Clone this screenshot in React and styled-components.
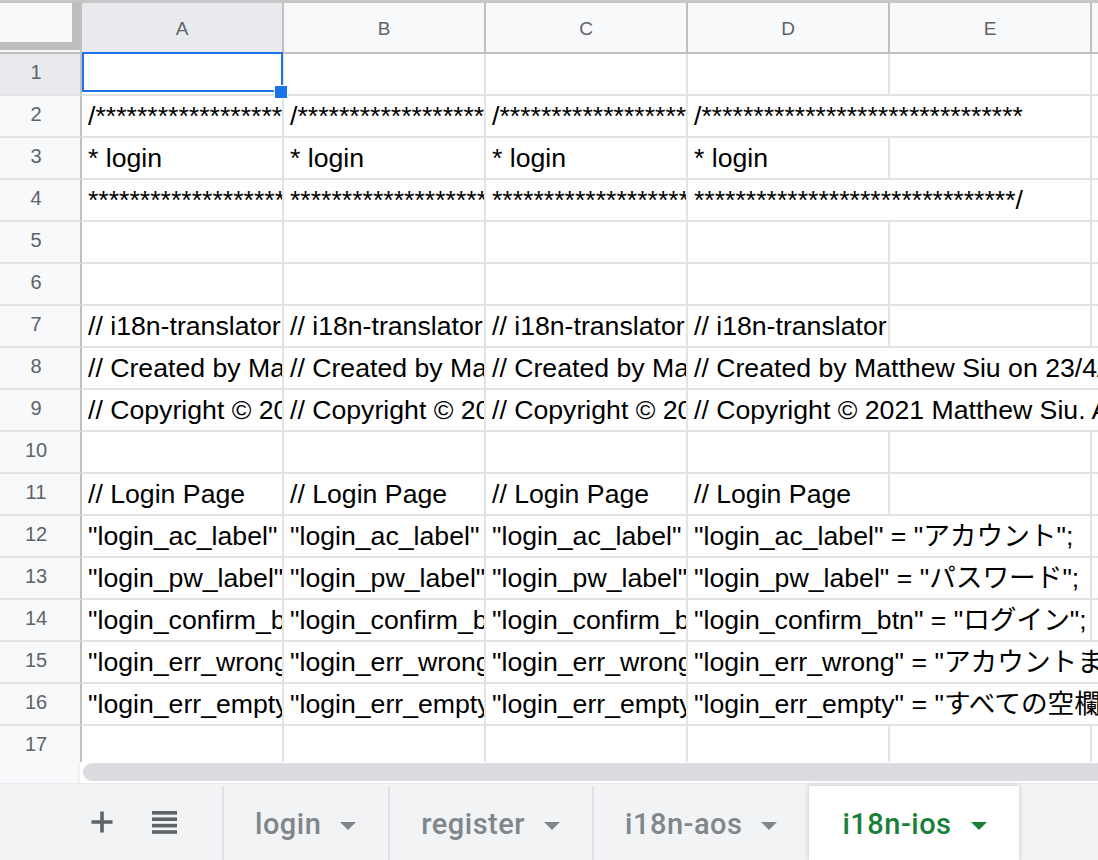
import React from 'react';
import styled, { createGlobalStyle } from 'styled-components';

const GlobalStyle = createGlobalStyle`
  html, body { margin: 0; padding: 0; background: #ffffff; overflow: hidden; }
  body { font-family: "Liberation Sans", Arial, "Noto Sans CJK JP", sans-serif; }
  * { box-sizing: border-box; }
`;

const COLS = ['A', 'B', 'C', 'D', 'E', 'F'];
const GRID = '82px repeat(6, 202px)';

const Screen = styled.div`
  width: 1098px;
  height: 860px;
  display: flex;
  flex-direction: column;
  overflow: hidden;
  border-top: 3px solid #c4c7c5;
`;

const GridViewport = styled.div`
  flex: 0 0 759px;
  overflow: hidden;
`;

const Row = styled.div`
  display: grid;
  grid-template-columns: ${GRID};
  height: ${p => (p.$header ? 51 : 42)}px;
`;

const Corner = styled.div`
  background: #f8f9fa;
  border-right: 2px solid #c0c0c0;
  border-bottom: 2px solid #c0c0c0;
`;

const FreezeHandle = styled.div`
  width: 80px;
  height: 47px;
  background: #f8f9fa;
  border-right: 8px solid #bdbdbd;
  border-bottom: 8px solid #bdbdbd;
`;

const ColHeader = styled.div`
  display: flex;
  align-items: center;
  justify-content: center;
  background: ${p => (p.$active ? '#e8eaed' : '#f8f9fa')};
  border-right: 2px solid #c0c0c0;
  border-bottom: 2px solid #c0c0c0;
  color: #5f6368;
  font-size: 19px;
  padding-top: 2px;
`;

const RowHeader = styled.div`
  display: flex;
  align-items: center;
  justify-content: center;
  padding: 0 8px 3px 0;
  background: ${p => (p.$active ? '#e8eaed' : '#f8f9fa')};
  border-right: 2px solid #c0c0c0;
  border-bottom: 2px solid #e2e3e3;
  color: #5f6368;
  font-size: 20px;
`;

const Cell = styled.div`
  position: relative;
  display: flex;
  align-items: flex-end;
  min-width: 0;
  grid-column: span ${p => p.$span || 1};
  border-right: 2px solid #e2e3e3;
  border-bottom: 2px solid #e2e3e3;
  background: #ffffff;
`;

const CellText = styled.span`
  display: block;
  width: 100%;
  overflow: hidden;
  white-space: nowrap;
  padding: 0 0 5px 6px;
  font-size: 26.67px;
  line-height: 30px;
  color: #000000;
`;

const Selection = styled.div`
  position: absolute;
  top: -2px;
  left: 0;
  right: -1px;
  bottom: 2px;
  border: 2px solid #1a73e8;
  z-index: 2;
  pointer-events: none;
`;

const FillHandle = styled.div`
  position: absolute;
  left: 192px;
  top: 31px;
  width: 14px;
  height: 14px;
  background: #1a73e8;
  border: 1px solid #ffffff;
  z-index: 3;
`;

const ScrollStrip = styled.div`
  flex: 0 0 21px;
  display: flex;
  background: #ffffff;
`;

const ScrollCorner = styled.div`
  width: 80px;
  background: #f8f9fa;
  border-right: 2px solid #f1f1f1;
`;

const ScrollThumb = styled.div`
  flex: 1;
  margin: 1px -40px 2px 3px;
  background: #dadce0;
  border-radius: 9px;
`;

const TabBar = styled.div`
  flex: 1;
  display: flex;
  background: #f1f3f4;
  padding-top: 2px;
  border-top: 1px solid #e8eaed;
`;

const Controls = styled.div`
  width: 222px;
  display: flex;
  align-items: center;
  padding-left: 88px;
  gap: 34px;
  padding-bottom: 2px;
`;

const IconButton = styled.div`
  width: 28px;
  height: 28px;
  display: flex;
  align-items: center;
  justify-content: center;
  color: #5f6368;
`;

const Tab = styled.div`
  display: flex;
  align-items: center;
  gap: 19px;
  padding: 2px 32px 0 31px;
  border-left: 2px solid ${p => (p.$active ? 'transparent' : '#dfe1e4')};
  background: ${p => (p.$active ? '#ffffff' : 'transparent')};
  box-shadow: ${p => (p.$active ? '0 0 4px 1px rgba(60, 64, 67, 0.18)' : 'none')};
  color: ${p => (p.$active ? '#188038' : '#80868b')};
  font-family: Roboto, "Noto Sans", sans-serif;
  font-weight: 500;
  font-size: 29px;
  letter-spacing: 0.5px;
  position: relative;
`;

const Caret = styled.span`
  width: 0;
  height: 0;
  border-left: 8px solid transparent;
  border-right: 8px solid transparent;
  border-top: 8px solid currentColor;
  margin-top: 3px;
`;

const PlusIcon = () => (
  <svg width="22" height="22" viewBox="0 0 22 22">
    <path d="M11 0.5v21M0.5 11h21" stroke="currentColor" strokeWidth="3.6" fill="none" />
  </svg>
);

const ListIcon = () => (
  <svg width="25" height="23" viewBox="0 0 25 23">
    <rect x="0" y="0" width="25" height="3.6" fill="currentColor" />
    <rect x="0" y="6.4" width="25" height="3.6" fill="currentColor" />
    <rect x="0" y="12.8" width="25" height="3.6" fill="currentColor" />
    <rect x="0" y="19.2" width="25" height="3.6" fill="currentColor" />
  </svg>
);

const STARS_OPEN = '/' + '*'.repeat(31);
const STARS_CLOSE = '*'.repeat(31) + '/';

// Each row: [A, B, C, D, span of D]
const rows = [
  ['', '', '', '', 1],
  [STARS_OPEN, STARS_OPEN, STARS_OPEN, STARS_OPEN, 2],
  ['* login', '* login', '* login', '* login', 1],
  [STARS_CLOSE, STARS_CLOSE, STARS_CLOSE, STARS_CLOSE, 2],
  ['', '', '', '', 1],
  ['', '', '', '', 1],
  ['// i18n-translator', '// i18n-translator', '// i18n-translator', '// i18n-translator', 1],
  [
    '// Created by Matthew Siu on 23/4/2021.',
    '// Created by Matthew Siu on 23/4/2021.',
    '// Created by Matthew Siu on 23/4/2021.',
    '// Created by Matthew Siu on 23/4/2021.',
    3,
  ],
  [
    '// Copyright © 2021 Matthew Siu. All rights reserved.',
    '// Copyright © 2021 Matthew Siu. All rights reserved.',
    '// Copyright © 2021 Matthew Siu. All rights reserved.',
    '// Copyright © 2021 Matthew Siu. All rights reserved.',
    3,
  ],
  ['', '', '', '', 1],
  ['// Login Page', '// Login Page', '// Login Page', '// Login Page', 1],
  [
    '"login_ac_label" = "Account";',
    '"login_ac_label" = "帳戶";',
    '"login_ac_label" = "账户";',
    '"login_ac_label" = "アカウント";',
    2,
  ],
  [
    '"login_pw_label" = "Password";',
    '"login_pw_label" = "密碼";',
    '"login_pw_label" = "密码";',
    '"login_pw_label" = "パスワード";',
    2,
  ],
  [
    '"login_confirm_btn" = "Login";',
    '"login_confirm_btn" = "登入";',
    '"login_confirm_btn" = "登录";',
    '"login_confirm_btn" = "ログイン";',
    2,
  ],
  [
    '"login_err_wrong" = "Wrong account or password";',
    '"login_err_wrong" = "帳戶或密碼錯誤";',
    '"login_err_wrong" = "账户或密码错误";',
    '"login_err_wrong" = "アカウントまたはパスワードが間違っています";',
    3,
  ],
  [
    '"login_err_empty" = "Please fill in all fields";',
    '"login_err_empty" = "請填寫所有欄位";',
    '"login_err_empty" = "请填写所有栏位";',
    '"login_err_empty" = "すべての空欄を入力してください";',
    3,
  ],
  ['', '', '', '', 1],
];

const tabs = [
  { name: 'login' },
  { name: 'register' },
  { name: 'i18n-aos' },
  { name: 'i18n-ios', active: true },
];

export default function App() {
  return (
    <>
      <GlobalStyle />
      <Screen>
        <GridViewport>
          <Row $header>
            <Corner>
              <FreezeHandle />
            </Corner>
            {COLS.map((c, i) => (
              <ColHeader key={c} $active={i === 0}>
                {c}
              </ColHeader>
            ))}
          </Row>
          {rows.map(([a, b, c, d, span], idx) => {
            const rest = 6 - 3 - span; // remaining empty columns after D
            return (
              <Row key={idx}>
                <RowHeader $active={idx === 0}>{idx + 1}</RowHeader>
                <Cell>
                  {idx === 0 && (
                    <>
                      <Selection />
                      <FillHandle />
                    </>
                  )}
                  <CellText>{a}</CellText>
                </Cell>
                <Cell>
                  <CellText>{b}</CellText>
                </Cell>
                <Cell>
                  <CellText>{c}</CellText>
                </Cell>
                <Cell $span={span}>
                  <CellText>{d}</CellText>
                </Cell>
                {Array.from({ length: rest }).map((_, k) => (
                  <Cell key={k}>
                    <CellText />
                  </Cell>
                ))}
              </Row>
            );
          })}
        </GridViewport>
        <ScrollStrip>
          <ScrollCorner />
          <ScrollThumb />
        </ScrollStrip>
        <TabBar>
          <Controls>
            <IconButton>
              <PlusIcon />
            </IconButton>
            <IconButton>
              <ListIcon />
            </IconButton>
          </Controls>
          {tabs.map(t => (
            <Tab key={t.name} $active={t.active}>
              {t.name}
              <Caret />
            </Tab>
          ))}
        </TabBar>
      </Screen>
    </>
  );
}
